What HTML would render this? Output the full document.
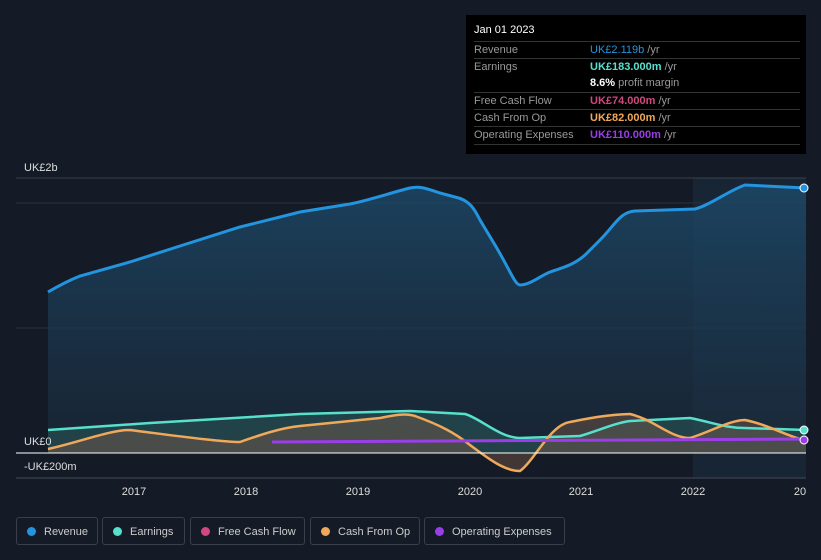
<!DOCTYPE html>
<html><head><style>
body{margin:0;background:#151b26;font-family:"Liberation Sans",sans-serif;width:821px;height:560px;overflow:hidden;position:relative}
.tip{position:absolute;left:466px;top:15px;width:340px;height:139px;background:#000;color:#fff;font-size:11px}
.row{position:absolute;left:8px;right:6px;border-top:1px solid #333;height:17px;line-height:17px;color:#999}
.row span{position:absolute;left:116px}
.leg{position:absolute;top:517px;height:28px;border:1px solid #3a3f4a;border-radius:3px;color:#ccc;font-size:11px;line-height:28px;box-sizing:border-box;padding-left:27px}
.leg i{position:absolute;left:10px;top:9px;width:9px;height:9px;border-radius:50%}
</style></head><body>
<svg width="821" height="560" style="position:absolute;left:0;top:0">
<defs><linearGradient id="g" x1="0" y1="0" x2="0" y2="1"><stop offset="0" stop-color="#1d4a6b" stop-opacity=".8"/><stop offset="1" stop-color="#1a2a3a" stop-opacity=".6"/></linearGradient></defs>
<rect x="693" y="178" width="113" height="300" fill="#1a2a3a" opacity=".7"/>
<line x1="16" y1="178" x2="806" y2="178" stroke="#3a404a"/>
<line x1="16" y1="203" x2="806" y2="203" stroke="#2a303a"/>
<line x1="16" y1="328" x2="806" y2="328" stroke="#2a303a"/>
<path d="M48,292 C60,285 70,280 80,276 L130,262 L180,246 L240,227 L300,212 L350,204 C370,200 390,193 410,188 C420,186 425,188 440,193 L455,197 C470,200 475,210 480,220 L495,245 C510,270 515,285 520,285 C530,285 540,276 550,272 C565,267 575,264 585,255 L600,240 C615,225 620,212 635,211 L695,209 C710,205 730,190 745,185 L806,188 L806,453 L48,453Z" fill="url(#g)"/>
<path d="M48,430 L150,423 L300,414 L410,411 L465,414 C480,418 500,438 520,438 L580,436 C600,430 615,423 630,421 L690,418 C715,423 725,428 745,428 L806,430 L806,453 L48,453Z" fill="#2b5a5a" opacity=".55"/>
<path d="M48,449 C80,442 110,430 130,430 C170,435 220,442 240,442 C260,435 280,428 300,426 L380,418 C395,415 405,413 415,416 C440,425 455,433 470,445 C490,460 505,471 520,471 C535,460 550,425 570,422 C590,418 605,415 630,414 C655,420 670,438 690,438 C710,432 730,420 745,420 C770,425 790,438 806,440 L806,453 L48,453Z" fill="#7a5a4a" opacity=".45"/>
<path d="M48,292 C60,285 70,280 80,276 L130,262 L180,246 L240,227 L300,212 L350,204 C370,200 390,193 410,188 C420,186 425,188 440,193 L455,197 C470,200 475,210 480,220 L495,245 C510,270 515,285 520,285 C530,285 540,276 550,272 C565,267 575,264 585,255 L600,240 C615,225 620,212 635,211 L695,209 C710,205 730,190 745,185 L806,188" fill="none" stroke="#2394df" stroke-width="3"/>
<path d="M48,430 L150,423 L300,414 L410,411 L465,414 C480,418 500,438 520,438 L580,436 C600,430 615,423 630,421 L690,418 C715,423 725,428 745,428 L806,430" fill="none" stroke="#58e0cc" stroke-width="2.5"/>
<path d="M48,449 C80,442 110,430 130,430 C170,435 220,442 240,442 C260,435 280,428 300,426 L380,418 C395,415 405,413 415,416 C440,425 455,433 470,445 C490,460 505,471 520,471 C535,460 550,425 570,422 C590,418 605,415 630,414 C655,420 670,438 690,438 C710,432 730,420 745,420 C770,425 790,438 806,440" fill="none" stroke="#f0a95a" stroke-width="2.5"/>
<path d="M272,442 L806,439" stroke="#9a3ee8" stroke-width="3"/>
<line x1="16" y1="453" x2="806" y2="453" stroke="#fff"/>
<line x1="16" y1="478" x2="806" y2="478" stroke="#444a55"/>
<circle cx="804" cy="188" r="4" fill="#2394df" stroke="#fff"/>
<circle cx="804" cy="430" r="4" fill="#58e0cc" stroke="#fff"/>
<circle cx="804" cy="440" r="4" fill="#9a3ee8" stroke="#fff"/>
<g fill="#ddd" font-size="11" text-anchor="middle">
<text x="134" y="495">2017</text><text x="246" y="495">2018</text><text x="358" y="495">2019</text><text x="470" y="495">2020</text><text x="581" y="495">2021</text><text x="693" y="495">2022</text><text x="800" y="495">20</text>
</g>
<g fill="#ddd" font-size="11"><text x="24" y="171">UK£2b</text><text x="24" y="445">UK£0</text><text x="24" y="470">-UK£200m</text></g>
</svg>
<div class="tip">
<div style="position:absolute;left:8px;top:9px;font-size:11px">Jan 01 2023</div>
<div class="row" style="top:26px">Revenue<span><b style="color:#2394df;font-weight:normal">UK£2.119b</b> /yr</span></div>
<div class="row" style="top:43px">Earnings<span><b style="color:#58e0cc">UK£183.000m</b> /yr</span></div>
<div class="row" style="top:60px;border:none"><span><b style="color:#fff">8.6%</b> profit margin</span></div>
<div class="row" style="top:77px">Free Cash Flow<span><b style="color:#d0487f">UK£74.000m</b> /yr</span></div>
<div class="row" style="top:94px">Cash From Op<span><b style="color:#f0a95a">UK£82.000m</b> /yr</span></div>
<div class="row" style="top:111px;border-bottom:1px solid #333">Operating Expenses<span><b style="color:#9a3ee8">UK£110.000m</b> /yr</span></div>
</div>
<div class="leg" style="left:16px;width:82px"><i style="background:#2394df"></i>Revenue</div>
<div class="leg" style="left:102px;width:83px"><i style="background:#58e0cc"></i>Earnings</div>
<div class="leg" style="left:190px;width:115px"><i style="background:#d0487f"></i>Free Cash Flow</div>
<div class="leg" style="left:310px;width:110px"><i style="background:#f0a95a"></i>Cash From Op</div>
<div class="leg" style="left:424px;width:141px"><i style="background:#9a3ee8"></i>Operating Expenses</div>
</body></html>
